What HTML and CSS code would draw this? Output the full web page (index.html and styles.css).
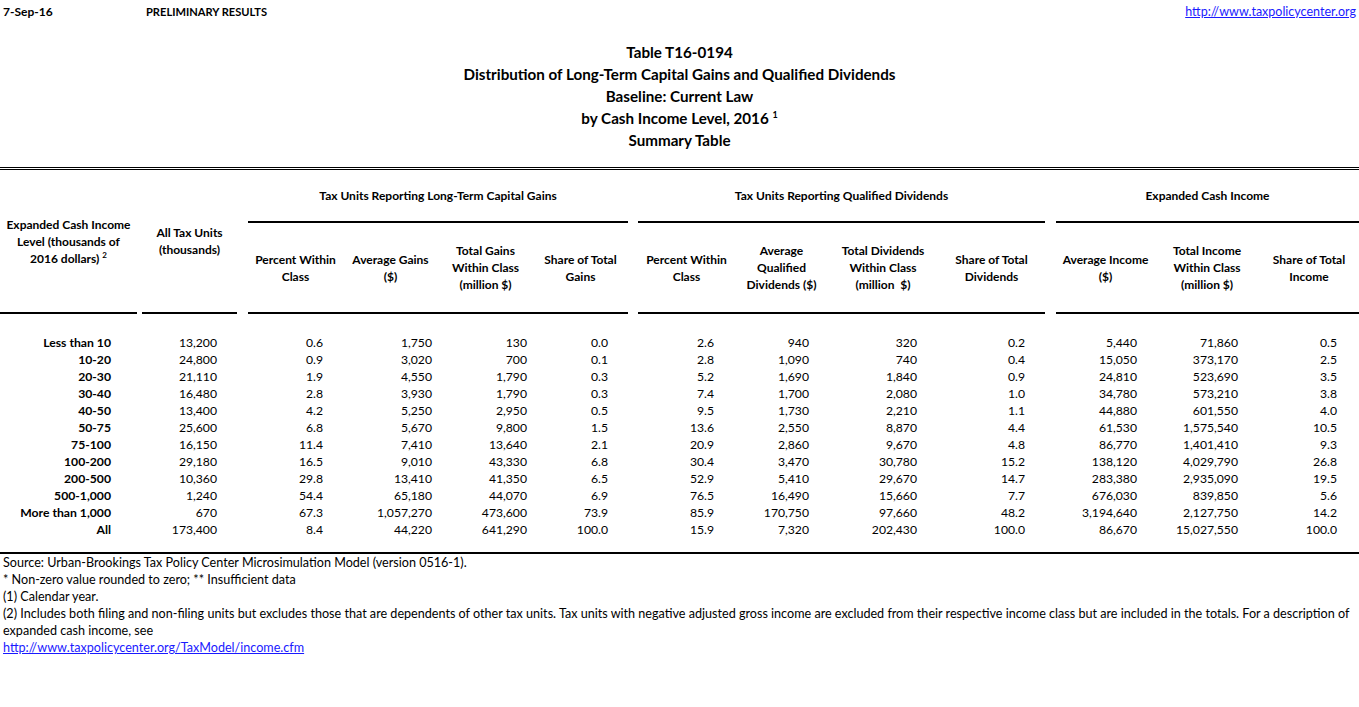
FILE: index.html
```html
<!DOCTYPE html>
<html>
<head>
<meta charset="utf-8">
<title>Table T16-0194</title>
<link rel="stylesheet" href="styles.css">
</head>
<body>
<div class="page">
  <div class="topbar">
    <span class="date">7-Sep-16</span>
    <span class="prelim">PRELIMINARY RESULTS</span>
    <a class="link" href="#">http://www.taxpolicycenter.org</a>
  </div>

  <div class="title">
    <div>Table T16-0194</div>
    <div>Distribution of Long-Term Capital Gains and Qualified Dividends</div>
    <div>Baseline: Current Law</div>
    <div>by Cash Income Level, 2016 <sup class="sup">1</sup></div>
    <div>Summary Table</div>
  </div>

  <div class="dbl"></div>

  <div class="head">
    <div class="seg seg-a stub"><span>Expanded Cash Income<br>Level (thousands of<br>2016 dollars) <sup class="sup">2</sup></span></div>
    <div class="seg seg-b stub"><span>All Tax Units<br>(thousands)</span></div>
    <div class="seg seg-c grp">
      <div class="gtitle">Tax Units Reporting Long-Term Capital Gains</div>
      <div class="subs subs-c">
        <div class="sub">Percent Within<br>Class</div>
        <div class="sub">Average Gains<br>($)</div>
        <div class="sub">Total Gains<br>Within Class<br>(million $)</div>
        <div class="sub">Share of Total<br>Gains</div>
      </div>
    </div>
    <div class="seg seg-d grp">
      <div class="gtitle">Tax Units Reporting Qualified Dividends</div>
      <div class="subs subs-d">
        <div class="sub">Percent Within<br>Class</div>
        <div class="sub">Average<br>Qualified<br>Dividends ($)</div>
        <div class="sub">Total Dividends<br>Within Class<br>(million&nbsp; $)</div>
        <div class="sub">Share of Total<br>Dividends</div>
      </div>
    </div>
    <div class="seg seg-e grp">
      <div class="gtitle">Expanded Cash Income</div>
      <div class="subs subs-e">
        <div class="sub">Average Income<br>($)</div>
        <div class="sub">Total Income<br>Within Class<br>(million $)</div>
        <div class="sub">Share of Total<br>Income</div>
      </div>
    </div>
  </div>

  <div class="body">
    <div class="row"><b>Less than 10</b><span>13,200</span><span>0.6</span><span>1,750</span><span>130</span><span>0.0</span><span>2.6</span><span>940</span><span>320</span><span>0.2</span><span>5,440</span><span>71,860</span><span>0.5</span></div>
    <div class="row"><b>10-20</b><span>24,800</span><span>0.9</span><span>3,020</span><span>700</span><span>0.1</span><span>2.8</span><span>1,090</span><span>740</span><span>0.4</span><span>15,050</span><span>373,170</span><span>2.5</span></div>
    <div class="row"><b>20-30</b><span>21,110</span><span>1.9</span><span>4,550</span><span>1,790</span><span>0.3</span><span>5.2</span><span>1,690</span><span>1,840</span><span>0.9</span><span>24,810</span><span>523,690</span><span>3.5</span></div>
    <div class="row"><b>30-40</b><span>16,480</span><span>2.8</span><span>3,930</span><span>1,790</span><span>0.3</span><span>7.4</span><span>1,700</span><span>2,080</span><span>1.0</span><span>34,780</span><span>573,210</span><span>3.8</span></div>
    <div class="row"><b>40-50</b><span>13,400</span><span>4.2</span><span>5,250</span><span>2,950</span><span>0.5</span><span>9.5</span><span>1,730</span><span>2,210</span><span>1.1</span><span>44,880</span><span>601,550</span><span>4.0</span></div>
    <div class="row"><b>50-75</b><span>25,600</span><span>6.8</span><span>5,670</span><span>9,800</span><span>1.5</span><span>13.6</span><span>2,550</span><span>8,870</span><span>4.4</span><span>61,530</span><span>1,575,540</span><span>10.5</span></div>
    <div class="row"><b>75-100</b><span>16,150</span><span>11.4</span><span>7,410</span><span>13,640</span><span>2.1</span><span>20.9</span><span>2,860</span><span>9,670</span><span>4.8</span><span>86,770</span><span>1,401,410</span><span>9.3</span></div>
    <div class="row"><b>100-200</b><span>29,180</span><span>16.5</span><span>9,010</span><span>43,330</span><span>6.8</span><span>30.4</span><span>3,470</span><span>30,780</span><span>15.2</span><span>138,120</span><span>4,029,790</span><span>26.8</span></div>
    <div class="row"><b>200-500</b><span>10,360</span><span>29.8</span><span>13,410</span><span>41,350</span><span>6.5</span><span>52.9</span><span>5,410</span><span>29,670</span><span>14.7</span><span>283,380</span><span>2,935,090</span><span>19.5</span></div>
    <div class="row"><b>500-1,000</b><span>1,240</span><span>54.4</span><span>65,180</span><span>44,070</span><span>6.9</span><span>76.5</span><span>16,490</span><span>15,660</span><span>7.7</span><span>676,030</span><span>839,850</span><span>5.6</span></div>
    <div class="row"><b>More than 1,000</b><span>670</span><span>67.3</span><span>1,057,270</span><span>473,600</span><span>73.9</span><span>85.9</span><span>170,750</span><span>97,660</span><span>48.2</span><span>3,194,640</span><span>2,127,750</span><span>14.2</span></div>
    <div class="row"><b>All</b><span>173,400</span><span>8.4</span><span>44,220</span><span>641,290</span><span>100.0</span><span>15.9</span><span>7,320</span><span>202,430</span><span>100.0</span><span>86,670</span><span>15,027,550</span><span>100.0</span></div>
  </div>

  <div class="notes">
    <div>Source: Urban-Brookings Tax Policy Center Microsimulation Model (version 0516-1).</div>
    <div>* Non-zero value rounded to zero; ** Insufficient data</div>
    <div>(1) Calendar year.</div>
    <div>(2) Includes both filing and non-filing units but excludes those that are dependents of other tax units. Tax units with negative adjusted gross income are excluded from their respective income class but are included in the totals. For a description of<br>expanded cash income, see</div>
    <div><a class="link" href="#">http://www.taxpolicycenter.org/TaxModel/income.cfm</a></div>
  </div>
</div>
</body>
</html>
```

FILE: styles.css
```css
html, body {
  margin: 0;
  padding: 0;
  background: #ffffff;
}

body {
  font-family: Lato, "Open Sans", "Liberation Sans", sans-serif;
  font-size: 12px;
  color: #000000;
}

.page {
  width: 1359px;
}

.link {
  color: #1a1aff;
  text-decoration: underline;
  font-weight: normal;
}

.sup {
  font-size: 8px;
  line-height: 0;
  vertical-align: 5px;
}

/* top bar */
.topbar {
  display: grid;
  grid-template-columns: 143px 1fr auto;
  height: 24px;
  line-height: 24px;
  padding: 0 3px;
  font-weight: bold;
}

.prelim {
  font-size: 11.1px;
}

.topbar .link {
  font-size: 12.5px;
}

/* titles */
.title {
  padding-top: 17px;
  margin-bottom: 16px;
  text-align: center;
  font-weight: bold;
  font-size: 15.2px;
  line-height: 22px;
}

.title .sup {
  font-size: 9px;
  vertical-align: 6px;
}

.dbl {
  border-top: 3px double #000000;
}

/* header */
.head {
  display: grid;
  grid-template-columns: 137px 5px 95px 11px 380px 10px 407px 11px 303px;
  grid-template-rows: 144px;
  font-weight: bold;
  line-height: 17px;
}

.seg-a { grid-column: 1; }
.seg-b { grid-column: 3; }
.seg-c { grid-column: 5; }
.seg-d { grid-column: 7; }
.seg-e { grid-column: 9; }

.stub {
  display: flex;
  align-items: center;
  justify-content: center;
  text-align: center;
  border-bottom: 2px solid #000000;
  box-sizing: border-box;
}

.grp {
  display: grid;
  grid-template-rows: 53px 91px;
}

.gtitle {
  display: flex;
  align-items: center;
  justify-content: center;
  border-bottom: 2px solid #000000;
  box-sizing: border-box;
}

.subs {
  display: grid;
  border-bottom: 2px solid #000000;
  box-sizing: border-box;
}

.subs-c { grid-template-columns: 95px 95px 95px 95px; }
.subs-d { grid-template-columns: 97px 93px 110px 107px; }
.subs-e { grid-template-columns: 99px 104px 100px; }

.sub {
  display: flex;
  align-items: center;
  justify-content: center;
  text-align: center;
}

/* data */
.body {
  padding: 20px 0 14px;
}

.row {
  display: grid;
  grid-template-columns: 111px 106px 106px 109px 95px 81px 106px 95px 108px 108px 112px 101px 99px;
  padding-right: 22px;
  height: 17px;
  line-height: 17px;
  font-size: 12.2px;
  text-align: right;
  white-space: nowrap;
}

.row b {
  font-weight: bold;
}

/* notes */
.notes {
  border-top: 2px solid #000000;
  padding-left: 3px;
  font-size: 12.6px;
  line-height: 17px;
  white-space: nowrap;
}
```
